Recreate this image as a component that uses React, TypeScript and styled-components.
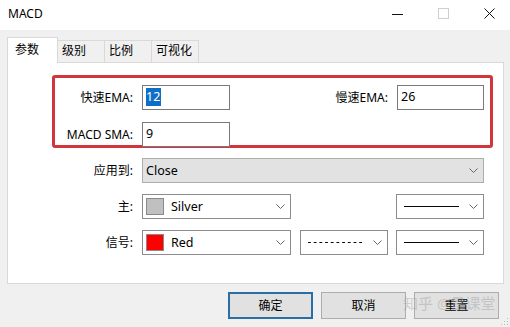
import React from 'react';
import styled, { createGlobalStyle } from 'styled-components';

const GlobalStyle = createGlobalStyle`
    html, body {
        margin: 0;
        padding: 0;
        background: #f0f0f0;
    }
    body {
        font-family: 'Noto Sans', 'Noto Sans CJK SC', sans-serif;
        font-size: 12px;
        color: #000;
    }
`;

const Window = styled.div`
    position: relative;
    width: 510px;
    height: 327px;
    background: #f0f0f0;
    overflow: hidden;
`;

const TitleBar = styled.div`
    display: flex;
    align-items: center;
    height: 30px;
    background: #fff;
`;

const Title = styled.div`
    flex: 1;
    padding-left: 8px;
    font-size: 12px;
    line-height: 16px;
    padding-bottom: 2px;
`;

const CaptionButton = styled.div`
    display: flex;
    align-items: center;
    justify-content: center;
    width: 46px;
    height: 30px;
    padding-left: 4px;
    padding-bottom: 3px;
    box-sizing: border-box;
`;

const Body = styled.div`
    padding: 7px 6px 0 7px;
`;

const TabBar = styled.div`
    display: flex;
    align-items: flex-end;
    height: 25px;
`;

const Tab = styled.div<{ $active?: boolean }>`
    position: relative;
    z-index: ${p => (p.$active ? 1 : 0)};
    box-sizing: border-box;
    width: ${p => (p.$active ? 51 : 47)}px;
    height: ${p => (p.$active ? 26 : 22)}px;
    margin-bottom: ${p => (p.$active ? -1 : 0)}px;
    padding-left: ${p => (p.$active ? 7 : 4)}px;
    padding-top: ${p => (p.$active ? 4 : 2)}px;
    border: 1px solid #d9d9d9;
    border-bottom: none;
    border-left-width: ${p => (p.$active ? 1 : 0)}px;
    background: ${p => (p.$active ? '#fff' : '#f0f0f0')};
    line-height: 16px;
    font-size: 12px;
`;

const Panel = styled.div`
    box-sizing: border-box;
    height: 222px;
    border: 1px solid #d9d9d9;
    background: #fff;
    padding-top: 12px;
`;

const Highlight = styled.div`
    box-sizing: border-box;
    height: 73px;
    margin: 0 10px 0 44px;
    padding: 7px 6px 0 0;
    border: 3px solid #d2363c;
    border-radius: 3px;
    display: flex;
    flex-direction: column;
    gap: 12px;
`;

const Row = styled.div`
    display: flex;
    align-items: center;
    height: 25px;
`;

const Label = styled.div<{ $width: number }>`
    width: ${p => p.$width}px;
    margin-right: 9px;
    text-align: right;
    line-height: 16px;
    white-space: nowrap;
`;

const SideLabel = styled.div`
    margin-left: auto;
    margin-right: 9px;
    line-height: 16px;
    white-space: nowrap;
`;

const Field = styled.div<{ $width: number }>`
    box-sizing: border-box;
    width: ${p => p.$width}px;
    height: 25px;
    border: 1px solid #7a7a7a;
    background: #fff;
    padding: 2px 0 0 3px;
    line-height: 18px;
    font-size: 12.5px;
`;

const Selected = styled.span`
    display: inline-block;
    background: #0f6fc6;
    color: #fff;
    padding: 0 1px 0 0;
`;

const Rows = styled.div`
    margin-top: 10px;
    padding-right: 19px;
    display: flex;
    flex-direction: column;
    gap: 11px;
`;

const Combo = styled.div<{ $width?: number; $gray?: boolean; $gap?: number }>`
    box-sizing: border-box;
    display: flex;
    align-items: center;
    width: ${p => (p.$width ? `${p.$width}px` : 'auto')};
    flex: ${p => (p.$width ? 'none' : '1')};
    height: 25px;
    margin-left: ${p => (p.$gap === undefined ? 0 : `${p.$gap}px`)};
    border: 1px solid ${p => (p.$gray ? '#adadad' : '#8c8c8c')};
    background: ${p => (p.$gray ? '#e2e2e2' : '#fff')};
    padding: 0 5px 0 3px;
    font-size: 12.5px;
    line-height: 18px;
`;

const PushRight = styled.div`
    margin-left: auto;
`;

const Swatch = styled.div<{ $color: string }>`
    box-sizing: border-box;
    width: 18px;
    height: 17px;
    border: 1px solid #8a8a8a;
    background: ${p => p.$color};
    margin-right: 7px;
`;

const ComboText = styled.div`
    flex: 1;
    white-space: nowrap;
`;

const LineSample = styled.svg`
    flex: 1;
    margin: 0 10px 0 4px;
    height: 3px;
`;

const ButtonRow = styled.div`
    display: flex;
    justify-content: flex-end;
    gap: 8px;
    margin-top: 8px;
    padding-right: 5px;
`;

const Button = styled.div<{ $default?: boolean }>`
    box-sizing: border-box;
    display: flex;
    align-items: center;
    justify-content: center;
    width: 85px;
    height: 27px;
    background: #e1e1e1;
    border: ${p => (p.$default ? '2px solid #2a6ea4' : '1px solid #adadad')};
    font-size: 12px;
    line-height: 16px;
`;

const Watermark = styled.div`
    position: absolute;
    left: 403px;
    top: 293px;
    font-size: 15px;
    line-height: 20px;
    color: rgba(160, 160, 160, 0.45);
    white-space: nowrap;
    pointer-events: none;
`;

const Grip = styled.svg`
    position: absolute;
    right: 1px;
    bottom: 1px;
`;

const Chevron: React.FC = () => (
    <svg width="9" height="5" viewBox="0 0 9 5">
        <path d="M0.5 0.5 L4.5 4.5 L8.5 0.5" fill="none" stroke="#666" strokeWidth="1" />
    </svg>
);

const LineCombo: React.FC<{ dashed?: boolean; gap?: number; push?: boolean }> = ({ dashed, gap, push }) => {
    const combo = (
        <Combo $width={88} $gap={gap}>
            <LineSample viewBox="0 0 58 3" preserveAspectRatio="none">
                <line x1="0" y1="1.5" x2="58" y2="1.5" stroke="#000" strokeWidth="1" strokeDasharray={dashed ? '3 3' : undefined} />
            </LineSample>
            <Chevron />
        </Combo>
    );
    return push ? <PushRight>{combo}</PushRight> : combo;
};

const ColorCombo: React.FC<{ color: string; name: string }> = ({ color, name }) => (
    <Combo $width={149}>
        <Swatch $color={color} />
        <ComboText>{name}</ComboText>
        <Chevron />
    </Combo>
);

const App: React.FC = () => {
    return (
        <Window>
            <GlobalStyle />
            <TitleBar>
                <Title>MACD</Title>
                <CaptionButton>
                    <svg width="11" height="11" viewBox="0 0 11 11">
                        <line x1="0" y1="6.5" x2="11" y2="6.5" stroke="#111" strokeWidth="1" />
                    </svg>
                </CaptionButton>
                <CaptionButton>
                    <svg width="11" height="11" viewBox="0 0 11 11">
                        <rect x="0.5" y="0.5" width="10" height="10" fill="none" stroke="#cfcfcf" strokeWidth="1" />
                    </svg>
                </CaptionButton>
                <CaptionButton>
                    <svg width="11" height="11" viewBox="0 0 11 11">
                        <path d="M0.5 0.5 L10.5 10.5 M10.5 0.5 L0.5 10.5" stroke="#111" strokeWidth="1" />
                    </svg>
                </CaptionButton>
            </TitleBar>
            <Body>
                <TabBar>
                    <Tab $active>参数</Tab>
                    <Tab>级别</Tab>
                    <Tab>比例</Tab>
                    <Tab>可视化</Tab>
                </TabBar>
                <Panel>
                    <Highlight>
                        <Row>
                            <Label $width={78}>快速EMA:</Label>
                            <Field $width={88}><Selected>12</Selected></Field>
                            <SideLabel>慢速EMA:</SideLabel>
                            <Field $width={87}>26</Field>
                        </Row>
                        <Row>
                            <Label $width={78}>MACD SMA:</Label>
                            <Field $width={88}>9</Field>
                        </Row>
                    </Highlight>
                    <Rows>
                        <Row>
                            <Label $width={125}>应用到:</Label>
                            <Combo $gray>
                                <ComboText>Close</ComboText>
                                <Chevron />
                            </Combo>
                        </Row>
                        <Row>
                            <Label $width={125}>主:</Label>
                            <ColorCombo color="#c0c0c0" name="Silver" />
                            <LineCombo push />
                        </Row>
                        <Row>
                            <Label $width={125}>信号:</Label>
                            <ColorCombo color="#ff0000" name="Red" />
                            <LineCombo dashed gap={9} />
                            <LineCombo gap={8} />
                        </Row>
                    </Rows>
                </Panel>
                <ButtonRow>
                    <Button $default>确定</Button>
                    <Button>取消</Button>
                    <Button>重置</Button>
                </ButtonRow>
            </Body>
            <Watermark>知乎 @量课堂</Watermark>
            <Grip width="8" height="8" viewBox="0 0 8 8">
                <rect x="6" y="0" width="1" height="1" fill="#bbb" />
                <rect x="3" y="3" width="1" height="1" fill="#bbb" />
                <rect x="6" y="3" width="1" height="1" fill="#bbb" />
                <rect x="0" y="6" width="1" height="1" fill="#bbb" />
                <rect x="3" y="6" width="1" height="1" fill="#bbb" />
                <rect x="6" y="6" width="1" height="1" fill="#bbb" />
            </Grip>
        </Window>
    );
};

export default App;
